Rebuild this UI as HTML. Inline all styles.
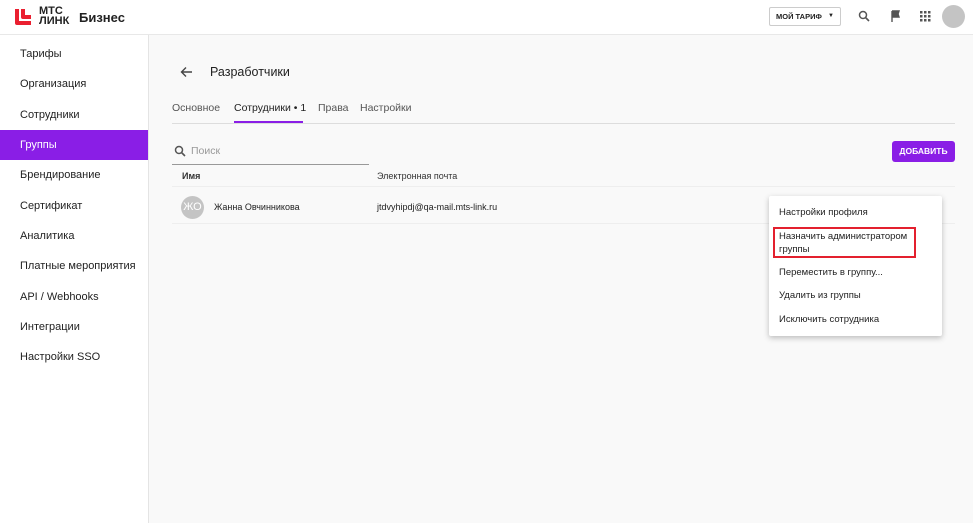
<!DOCTYPE html>
<html><head><meta charset="utf-8"><style>
*{box-sizing:border-box;margin:0;padding:0}
body{width:973px;height:523px;overflow:hidden;background:#f9f9f9;font-family:"Liberation Sans",sans-serif;color:#222;position:relative}
.hdr{position:absolute;left:0;top:0;width:973px;height:35px;background:#fff;border-bottom:1px solid #e8e8e8}
.side{position:absolute;left:0;top:35px;width:149px;height:488px;background:#fff;border-right:1px solid #e4e4e4}
.si{position:absolute;left:0;width:148px;height:30px;line-height:30px;padding-left:20px;font-size:11px;color:#222;white-space:nowrap}
.si.a{background:#8a1ee6;color:#fff}
.t{position:absolute;white-space:nowrap}
.menu{position:absolute;left:769px;top:196px;width:173px;height:140px;background:#fff;box-shadow:0 2px 6px rgba(0,0,0,.25);border-radius:2px}
.mi{position:absolute;left:10px;font-size:9.5px;color:#222;white-space:nowrap}
</style></head><body>
<div class="hdr">
 <svg style="position:absolute;left:14px;top:8px" width="18" height="18" viewBox="0 0 18 18"><path d="M1 1h4v12h12v4H3a2 2 0 0 1-2-2z M7 1h4v6h6v4H9a2 2 0 0 1-2-2z" fill="#ea1f30"/></svg>
 <div class="t" style="left:39px;top:6px;font-size:11px;font-weight:bold;line-height:10px">МТС<br>ЛИНК</div>
 <div class="t" style="left:79px;top:10px;font-size:13px;font-weight:bold">Бизнес</div>
 <div class="t" style="left:769px;top:7px;width:72px;height:19px;border:1px solid #ccc;border-radius:2px;font-size:7.5px;font-weight:bold;line-height:17px;padding-left:6px">МОЙ ТАРИФ<span style="position:absolute;left:58px;top:0;font-size:6px">▼</span></div>
 <svg style="position:absolute;left:858px;top:10px" width="12" height="12"><circle cx="5" cy="5" r="3.5" stroke="#555" stroke-width="1.5" fill="none"/><path d="M7.5 7.5L11 11" stroke="#555" stroke-width="1.6"/></svg>
 <svg style="position:absolute;left:890px;top:10px" width="12" height="12"><path d="M2 1v11M2 1h7l-1 3 1 3H2" fill="#555" stroke="#555" stroke-width="1.4"/></svg>
 <svg style="position:absolute;left:920px;top:11px" width="11" height="11" fill="#555"><rect x="0" y="0" width="2.5" height="2.5"/><rect x="4" y="0" width="2.5" height="2.5"/><rect x="8" y="0" width="2.5" height="2.5"/><rect x="0" y="4" width="2.5" height="2.5"/><rect x="4" y="4" width="2.5" height="2.5"/><rect x="8" y="4" width="2.5" height="2.5"/><rect x="0" y="8" width="2.5" height="2.5"/><rect x="4" y="8" width="2.5" height="2.5"/><rect x="8" y="8" width="2.5" height="2.5"/></svg>
 <div style="position:absolute;left:942px;top:5px;width:23px;height:23px;border-radius:50%;background:#c4c4c4"></div>
</div>
<div class="side">
 <div class="si" style="top:4px">Тарифы</div>
 <div class="si" style="top:34px">Организация</div>
 <div class="si" style="top:65px">Сотрудники</div>
 <div class="si a" style="top:95px">Группы</div>
 <div class="si" style="top:125px">Брендирование</div>
 <div class="si" style="top:156px">Сертификат</div>
 <div class="si" style="top:186px">Аналитика</div>
 <div class="si" style="top:216px">Платные мероприятия</div>
 <div class="si" style="top:247px">API / Webhooks</div>
 <div class="si" style="top:277px">Интеграции</div>
 <div class="si" style="top:307px">Настройки SSO</div>
</div>
<svg style="position:absolute;left:180px;top:66px" width="13" height="12"><path d="M12 6H2M6 1.5L1.5 6 6 10.5" stroke="#444" stroke-width="1.4" fill="none"/></svg>
<div class="t" style="left:210px;top:65px;font-size:12.5px">Разработчики</div>
<div class="t" style="left:172px;top:102px;font-size:10.5px;color:#555">Основное</div>
<div class="t" style="left:234px;top:102px;font-size:10.5px;color:#222">Сотрудники • 1</div>
<div style="position:absolute;left:234px;top:121px;width:69px;height:2px;background:#8a1ee6"></div>
<div class="t" style="left:318px;top:102px;font-size:10.5px;color:#555">Права</div>
<div class="t" style="left:360px;top:102px;font-size:10.5px;color:#555">Настройки</div>
<div style="position:absolute;left:172px;top:123px;width:783px;height:1px;background:#ddd"></div>
<svg style="position:absolute;left:174px;top:145px" width="12" height="12"><circle cx="5" cy="5" r="3.5" stroke="#555" stroke-width="1.5" fill="none"/><path d="M7.5 7.5L11 11" stroke="#555" stroke-width="1.6"/></svg>
<div class="t" style="left:191px;top:145px;font-size:10.5px;color:#999">Поиск</div>
<div style="position:absolute;left:172px;top:164px;width:197px;height:1px;background:#999"></div>
<div style="position:absolute;left:892px;top:141px;width:63px;height:21px;background:#8a1ee6;border-radius:3px;color:#fff;font-size:8.5px;font-weight:bold;text-align:center;line-height:21px">ДОБАВИТЬ</div>
<div class="t" style="left:182px;top:171px;font-size:9px;font-weight:bold;color:#333">Имя</div>
<div class="t" style="left:377px;top:171px;font-size:9px;color:#333">Электронная почта</div>
<div style="position:absolute;left:172px;top:186px;width:783px;height:1px;background:#eee"></div>
<div style="position:absolute;left:181px;top:196px;width:23px;height:23px;border-radius:50%;background:#c4c4c4;color:#fff;font-size:11px;text-align:center;line-height:23px">ЖО</div>
<div class="t" style="left:214px;top:202px;font-size:9px">Жанна Овчинникова</div>
<div class="t" style="left:377px;top:202px;font-size:9px">jtdvyhipdj@qa-mail.mts-link.ru</div>
<div style="position:absolute;left:172px;top:223px;width:783px;height:1px;background:#eee"></div>
<div class="menu">
 <div class="mi" style="top:11px">Настройки профиля</div>
 <div style="position:absolute;left:4px;top:31px;width:143px;height:31px;border:2px solid #e3202e"></div>
 <div class="mi" style="top:34px;line-height:13px">Назначить администратором<br>группы</div>
 <div class="mi" style="top:71px">Переместить в группу...</div>
 <div class="mi" style="top:94px">Удалить из группы</div>
 <div class="mi" style="top:118px">Исключить сотрудника</div>
</div>
</body></html>
